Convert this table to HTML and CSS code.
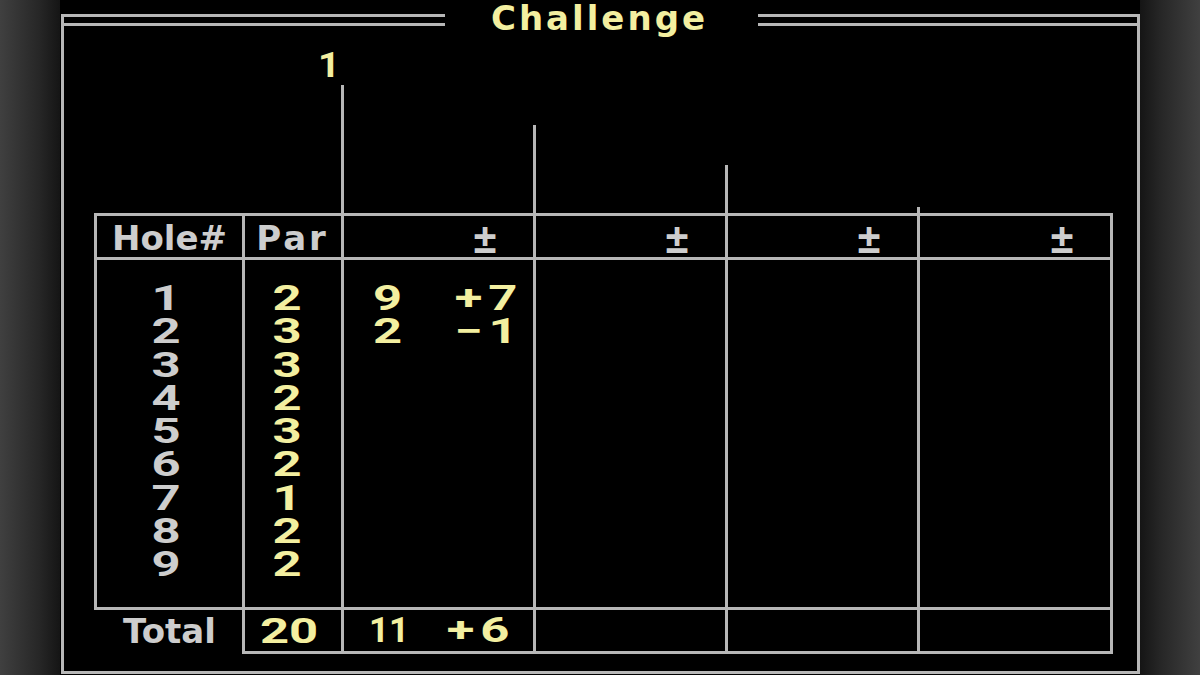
FILE: index.html
```html
<!DOCTYPE html>
<html lang="en">
<head>
<meta charset="utf-8">
<title>Challenge</title>
<link rel="stylesheet" href="styles.css">
</head>
<body>
<div class="screen">
  <div class="frame">
    <div class="titlebar">
      <div class="rule"></div>
      <div class="title"><span class="tx title-tx">Challenge</span></div>
      <div class="rule"></div>
    </div>
    <div class="board">
      <!-- player stems -->
      <div class="stem-gap"></div>
      <div class="label-cell"><span class="tx dig or narrow yellow">1</span></div>
      <div class="stem st1"></div>
      <div class="stem st2"></div>
      <div class="stem st3"></div>
      <div class="stem st4"></div>

      <!-- header -->
      <div class="cell head c-hole"><span class="tx">Hole#</span></div>
      <div class="cell head c-par"><span class="tx w-par">Par</span></div>
      <div class="cell head c-pl"><span class="pm">±</span></div>
      <div class="cell head c-pl"><span class="pm">±</span></div>
      <div class="cell head c-pl"><span class="pm">±</span></div>
      <div class="cell head c-pl last"><span class="pm">±</span></div>

      <!-- body -->
      <div class="cell body c-hole">
        <div class="line"><span class="tx dig">1</span></div>
        <div class="line"><span class="tx dig">2</span></div>
        <div class="line"><span class="tx dig">3</span></div>
        <div class="line"><span class="tx dig">4</span></div>
        <div class="line"><span class="tx dig">5</span></div>
        <div class="line"><span class="tx dig">6</span></div>
        <div class="line"><span class="tx dig">7</span></div>
        <div class="line"><span class="tx dig">8</span></div>
        <div class="line"><span class="tx dig">9</span></div>
      </div>
      <div class="cell body c-par yellow">
        <div class="line"><span class="tx dig">2</span></div>
        <div class="line"><span class="tx dig">3</span></div>
        <div class="line"><span class="tx dig">3</span></div>
        <div class="line"><span class="tx dig">2</span></div>
        <div class="line"><span class="tx dig">3</span></div>
        <div class="line"><span class="tx dig">2</span></div>
        <div class="line"><span class="tx dig">1</span></div>
        <div class="line"><span class="tx dig">2</span></div>
        <div class="line"><span class="tx dig">2</span></div>
      </div>
      <div class="cell body c-pl yellow">
        <div class="line score"><span class="tx dig ol">9</span><span class="tx dig or diff">+7</span></div>
        <div class="line score"><span class="tx dig ol">2</span><span class="tx dig or diff">−1</span></div>
      </div>
      <div class="cell body c-pl"></div>
      <div class="cell body c-pl"></div>
      <div class="cell body c-pl last"></div>

      <!-- totals -->
      <div class="cell tot c-hole open"><span class="tx">Total</span></div>
      <div class="cell tot c-par yellow"><span class="tx dig">20</span></div>
      <div class="cell tot c-pl yellow">
        <div class="score total"><span class="tx dig ol ones">11</span><span class="tx dig or diff">+6</span></div>
      </div>
      <div class="cell tot c-pl"></div>
      <div class="cell tot c-pl"></div>
      <div class="cell tot c-pl last"></div>
    </div>
  </div>
</div>
</body>
</html>
```

FILE: styles.css
```css
:root {
  --line: #b7b7b7;
  --gray: #cdcdcd;
  --yellow: #f3efa0;
}

html, body {
  margin: 0;
  padding: 0;
}

body {
  width: 1200px;
  height: 675px;
  overflow: hidden;
  background: linear-gradient(to right,
    #404040 0px, #262626 40px, #151515 60px,
    #000 60px, #000 1140px,
    #151515 1140px, #262626 1160px, #404040 1200px);
  font-family: "DejaVu Sans", "Liberation Sans", sans-serif;
  font-weight: bold;
  font-size: 34px;
  color: var(--gray);
}

.screen {
  margin-left: 60px;
  width: 1080px;
  height: 675px;
  background: #000;
  padding-top: 14px;
  box-sizing: border-box;
}

.frame {
  margin-left: 1px;
  width: 1079px;
  height: 660px;
  box-sizing: border-box;
  border-left: 3px solid var(--line);
  border-right: 3px solid var(--line);
  border-bottom: 3px solid var(--line);
}

.titlebar {
  display: grid;
  grid-template-columns: 381px 313px 1fr;
  grid-template-rows: 12px;
  align-items: start;
}

.rule {
  height: 12px;
  box-sizing: border-box;
  border-top: 3px solid var(--line);
  border-bottom: 3px solid var(--line);
}

.title {
  margin-top: -12px;
  height: 32px;
  line-height: 32px;
  text-align: center;
  color: var(--yellow);
}

.tx {
  display: inline-block;
}

.title-tx { letter-spacing: 3px; padding-right: 4px; }
.w-par { letter-spacing: 3px; padding-left: 3px; }

.dig {
  font-family: Roboto, "Liberation Sans", Arial, sans-serif;
  font-size: 35px;
  transform: scaleX(1.45);
}
.ol { transform-origin: left center; }
.or { transform-origin: right center; }
.dig.narrow { transform: scaleX(1.1); }
.dig.ones {
  transform: none;
  margin-left: -4px;
}

.yellow { color: var(--yellow); }

.board {
  margin-left: 30px;
  display: grid;
  grid-template-columns: 148px 99px 192px 192px 192px 196px;
  grid-template-rows: 187px 47px 350px 44px;
}

.label-cell {
  padding: 22px 1px 0 0;
  line-height: 34px;
  text-align: right;
}

.stem {
  align-self: end;
  border-left: 3px solid var(--line);
}
.st1 { height: 128px; }
.st2 { height: 88px; }
.st3 { height: 48px; }
.st4 { height: 6px; }

.cell {
  box-sizing: border-box;
  border-left: 3px solid var(--line);
}
.cell.last { border-right: 3px solid var(--line); }

.head {
  border-top: 3px solid var(--line);
  border-bottom: 3px solid var(--line);
  padding-top: 5px;
  line-height: 34px;
}

.body {
  border-bottom: 3px solid var(--line);
  padding-top: 22px;
  line-height: 33.3px;
}

.line {
  height: 33.3px;
  display: flex;
  justify-content: center;
}

.tot {
  border-bottom: 3px solid var(--line);
  padding-top: 4px;
  line-height: 34px;
}

.tot.open {
  border-left-color: transparent;
  border-bottom: none;
}

.c-hole { text-align: center; }
.body.c-hole { padding-right: 7px; }
.c-par { text-align: center; }
.head.c-par { padding-right: 4px; }
.body.c-par { padding-right: 11px; }
.tot.c-par { padding-right: 7px; }

.head.c-pl {
  text-align: right;
  padding-right: 36px;
}

.pm {
  display: inline-block;
  font-family: "DejaVu Sans Mono", monospace;
  font-size: 40px;
  line-height: 36px;
}

.score {
  display: flex;
  justify-content: space-between;
  padding: 0 10px 0 29px;
}
.line.score {
  justify-content: space-between;
}
.score.total {
  padding-right: 18px;
}

.diff { letter-spacing: 4px; }
```
